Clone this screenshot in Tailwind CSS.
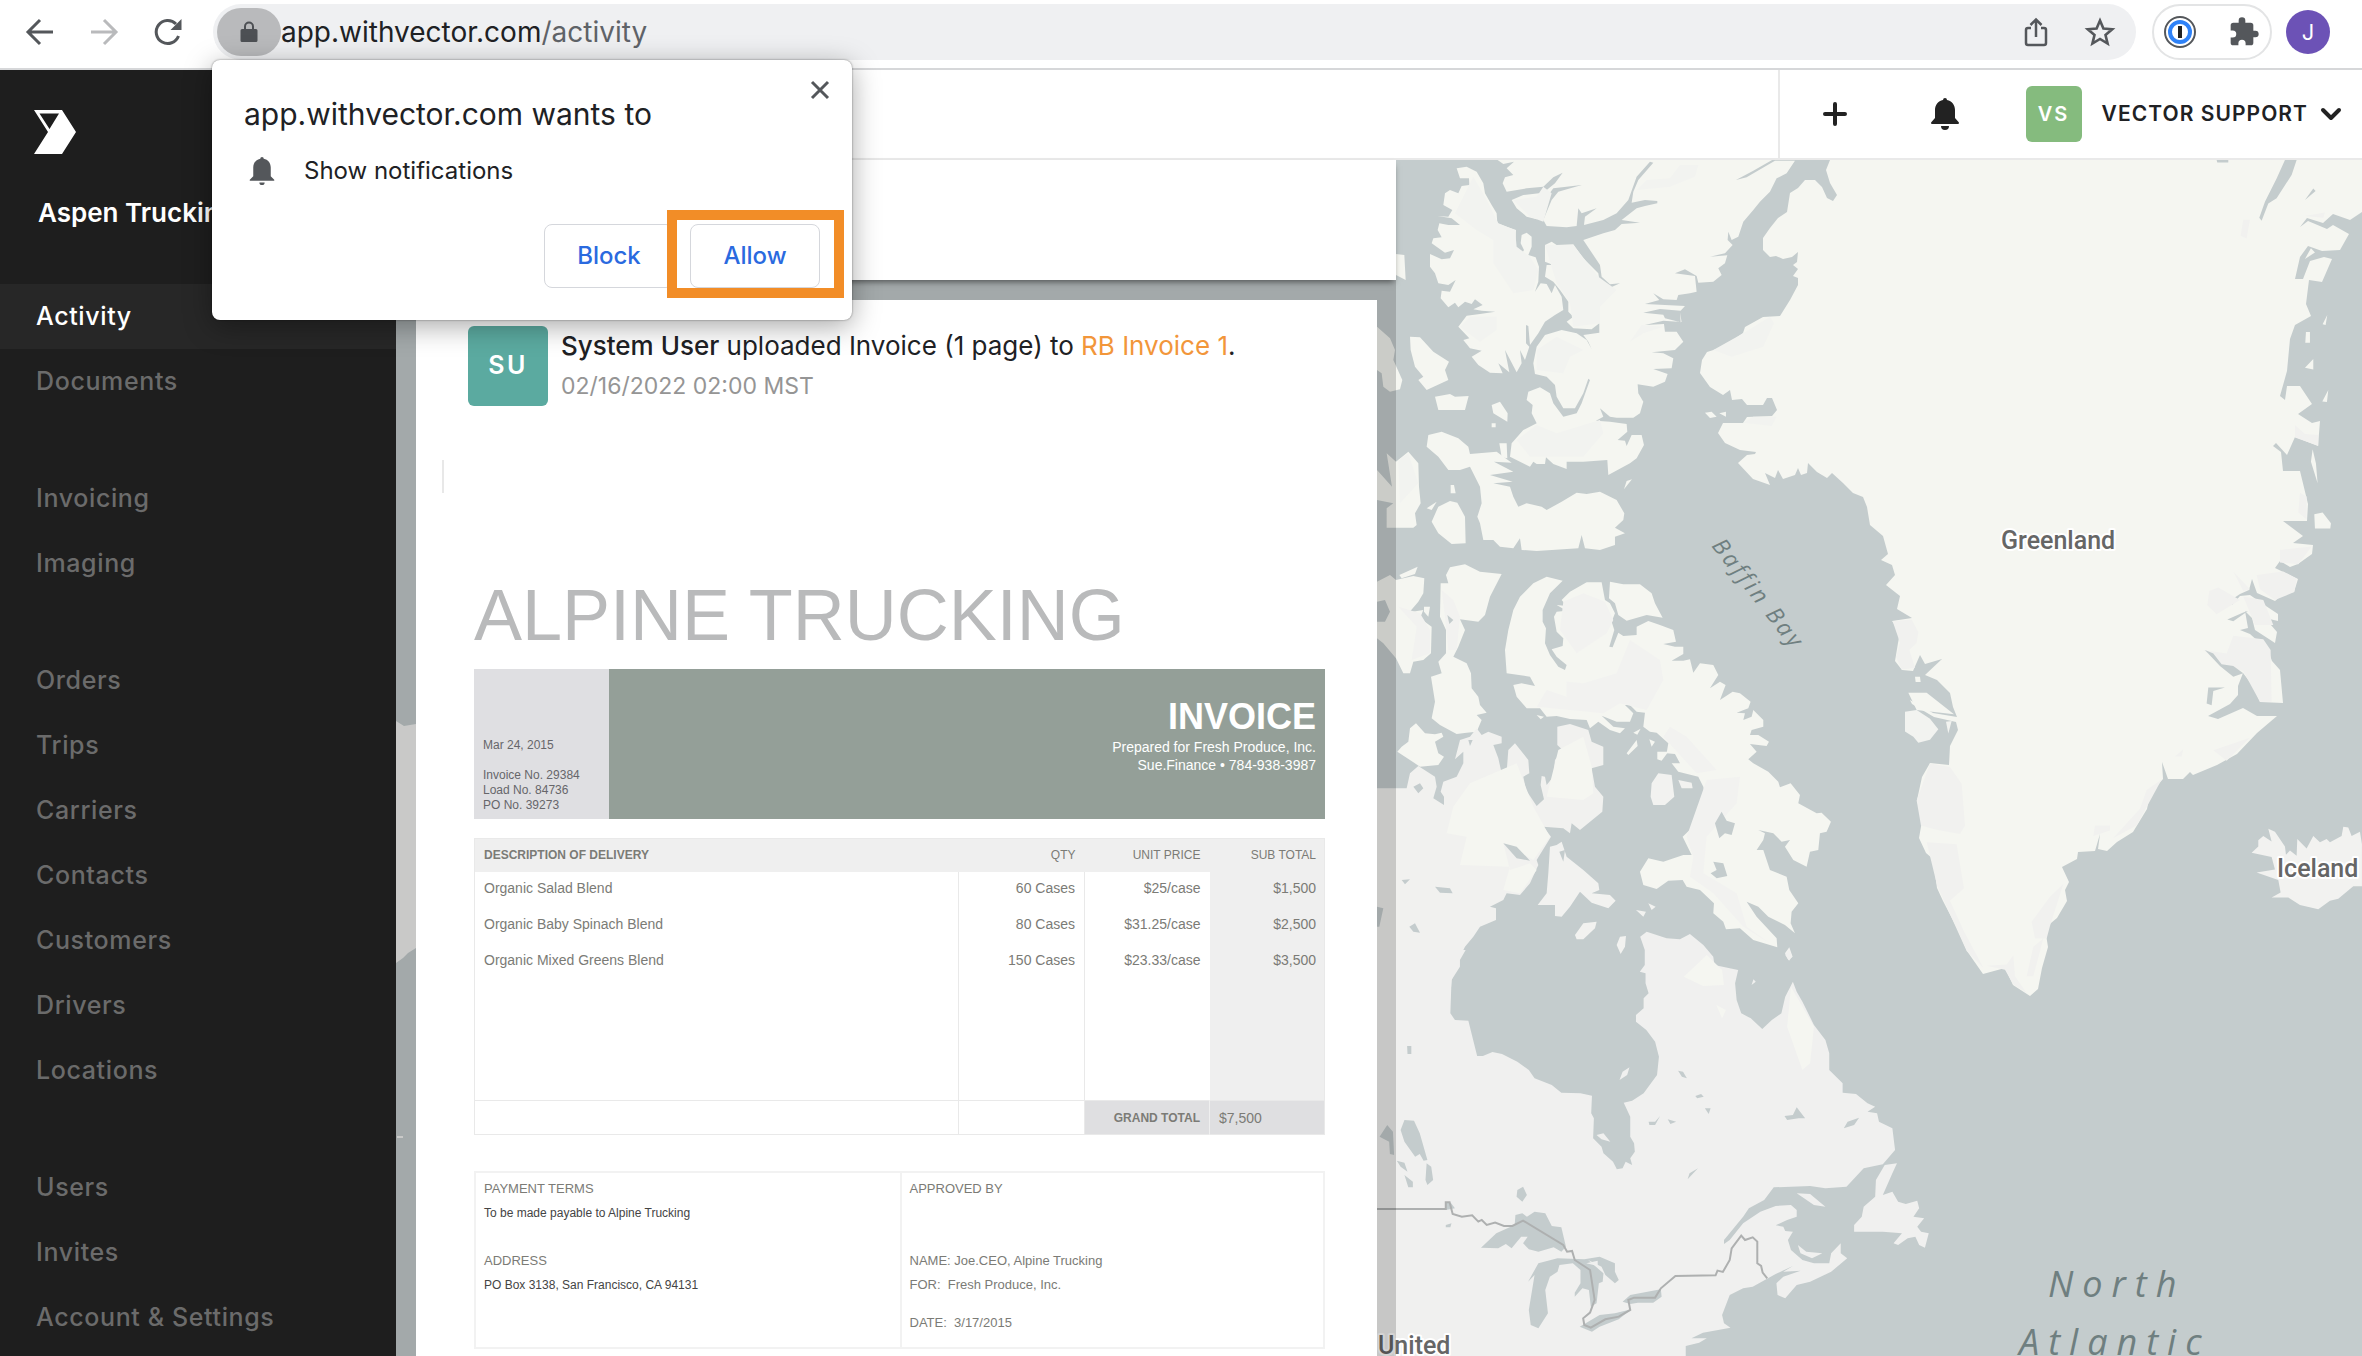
<!DOCTYPE html>
<html lang="en">
<head>
<meta charset="utf-8">
<title>Activity</title>
<script src="https://cdn.jsdelivr.net/npm/@tailwindcss/browser@4"></script>
</head>
<body class="bg-white font-['Inter',sans-serif] text-[#202124]">
<div class="relative flex min-h-screen flex-col overflow-hidden">

  <!-- Browser toolbar -->
  <div class="flex h-[70px] shrink-0 items-center border-b-2 border-[#d6d7d9] bg-white pr-8 pl-6 pb-1">
    <div class="flex w-[189px] shrink-0 gap-8">
      <button aria-label="Back" class="size-8 text-[#54575b]"><svg viewBox="0 0 32 32" class="size-8" fill="none" stroke="currentColor" stroke-width="3"><path d="M29 16H5M16 4 4 16l12 12"/></svg></button>
      <button aria-label="Forward" class="size-8 text-[#b9babc]"><svg viewBox="0 0 32 32" class="size-8" fill="none" stroke="currentColor" stroke-width="3"><path d="M3 16h24M16 4l12 12-12 12"/></svg></button>
      <button aria-label="Reload" class="size-8 text-[#54575b]"><svg viewBox="0 0 32 32" class="size-8" fill="none" stroke="currentColor" stroke-width="3"><path d="M26.500 20A11.500 11.500 0 1 1 24 8"/><path d="M29.500 3v11h-11z" fill="currentColor" stroke="none"/></svg></button>
    </div>
    <div class="flex h-14 flex-1 items-center rounded-full bg-[#eff0f2] pl-1 pr-5">
      <button aria-label="Site information" class="flex h-12 w-16 items-center justify-center rounded-full bg-[#b9babc]"><svg viewBox="0 0 18 22" class="h-[22px] w-[18px] text-[#4d5054]"><path fill="currentColor" d="M2 8h14a1.500 1.500 0 0 1 1.500 1.500v10A1.500 1.500 0 0 1 16 21H2a1.500 1.500 0 0 1-1.500-1.500v-10A1.500 1.500 0 0 1 2 8z"/><path d="M5 8V5.500a4 4 0 0 1 8 0V8" fill="none" stroke="currentColor" stroke-width="2"/></svg></button>
      <div class="flex-1 text-[28px] leading-8">app.withvector.com<span class="text-[#5f6368]">/activity</span></div>
      <button aria-label="Share" class="size-8 text-[#54575b]"><svg viewBox="0 0 32 32" class="size-8" fill="none" stroke="currentColor" stroke-width="2.500"><path d="M11 12H8a2 2 0 0 0-2 2v13a2 2 0 0 0 2 2h16a2 2 0 0 0 2-2V14a2 2 0 0 0-2-2h-3M16 21V4M10.500 9 16 3.500 21.500 9"/></svg></button>
      <button aria-label="Bookmark" class="ml-8 size-8 text-[#54575b]"><svg viewBox="0 0 32 32" class="size-8" fill="none" stroke="currentColor" stroke-width="2.600"><path d="m16 4.500 3.400 8.100 8.800.7-6.700 5.700 2.100 8.600L16 23l-7.600 4.600 2.100-8.600-6.700-5.700 8.800-.7z"/></svg></button>
    </div>
    <div class="ml-4 flex h-14 w-[120px] items-center justify-between rounded-full border-2 border-[#e3e4e5] px-[10px]">
      <button aria-label="Password manager" class="size-8"><svg viewBox="0 0 32 32" class="size-8"><circle cx="16" cy="16" r="15" fill="#fff" stroke="#54575b" stroke-width="2"/><circle cx="16" cy="16" r="10" fill="#fff" stroke="#2f82f7" stroke-width="4"/><rect x="14" y="10" width="4" height="12" fill="#222"/></svg></button>
      <button aria-label="Extensions" class="size-8 text-[#54575b]"><svg viewBox="0 0 24 24" class="size-8"><path fill="currentColor" d="M20.500 11H19V7a2 2 0 0 0-2-2h-4V3.500a2.500 2.500 0 0 0-5 0V5H4a2 2 0 0 0-2 2v3.800h1.500a2.700 2.700 0 0 1 0 5.400H2V20a2 2 0 0 0 2 2h3.800v-1.500a2.700 2.700 0 0 1 5.400 0V22H17a2 2 0 0 0 2-2v-4h1.500a2.500 2.500 0 0 0 0-5z"/></svg></button>
    </div>
    <button aria-label="Profile" class="ml-[14px] size-11 rounded-full bg-[#6c52b6] text-[22px] text-white">J</button>
  </div>

  <div class="flex flex-1">
    <!-- Sidebar -->
    <aside class="w-[396px] shrink-0 bg-[#1e1e1e]">
      <svg viewBox="0 0 42 44" class="mt-10 ml-[34px] h-11 w-[42px]"><path fill="#fff" fill-rule="evenodd" d="M0 0h28l14 22-14 22H0l14-22zM5.500 3.500l10 15.500L25 3.500z"/></svg>
      <div class="mt-[43px] mb-14 ml-[38px] text-[26px] leading-[31px] font-semibold text-white">Aspen Trucking</div>
      <nav class="flex flex-col gap-[52px] text-[25px] leading-[65px] font-medium tracking-wide text-[#6b6b6b]">
        <div class="flex flex-col">
          <a href="#" class="bg-[#272727] pl-9 text-white">Activity</a>
          <a href="#" class="pl-9">Documents</a>
        </div>
        <div class="flex flex-col">
          <a href="#" class="pl-9">Invoicing</a>
          <a href="#" class="pl-9">Imaging</a>
        </div>
        <div class="flex flex-col">
          <a href="#" class="pl-9">Orders</a>
          <a href="#" class="pl-9">Trips</a>
          <a href="#" class="pl-9">Carriers</a>
          <a href="#" class="pl-9">Contacts</a>
          <a href="#" class="pl-9">Customers</a>
          <a href="#" class="pl-9">Drivers</a>
          <a href="#" class="pl-9">Locations</a>
        </div>
        <div class="flex flex-col">
          <a href="#" class="pl-9">Users</a>
          <a href="#" class="pl-9">Invites</a>
          <a href="#" class="pl-9">Account &amp; Settings</a>
        </div>
      </nav>
    </aside>

    <div class="flex min-w-0 flex-1 flex-col">
      <header class="flex h-[90px] shrink-0 justify-end border-b-2 border-[#e9e9e9] bg-white">
        <div class="flex items-center border-l-2 border-[#e9e9e9] pr-5 pl-[43px]">
          <button aria-label="Add" class="size-6"><svg viewBox="0 0 24 24" class="size-6" stroke="#222" stroke-width="4" stroke-linecap="round"><path d="M12 2v20M2 12h20"/></svg></button>
          <button aria-label="Notifications" class="ml-[84px] h-8 w-7"><svg viewBox="0 0 28 32" class="h-8 w-7" fill="#222"><path d="M14 0a2 2 0 0 1 2 2c5 1 8 5 8 10v8l3.500 4c1 1 .3 2-1 2h-25c-1.300 0-2-1-1-2L4 20v-8C4 7 7 3 12 2a2 2 0 0 1 2-2zM10 28h8a4 4 0 0 1-8 0z"/></svg></button>
          <span class="ml-[67px] flex size-14 items-center justify-center rounded-md bg-[#85bb7e] text-xl font-semibold tracking-widest text-white">VS</span>
          <button class="ml-5 flex items-center gap-3 text-[21px] font-semibold tracking-wider">VECTOR SUPPORT
            <svg viewBox="0 0 22 14" class="h-[14px] w-[22px]" fill="none" stroke="#222" stroke-width="4" stroke-linecap="round" stroke-linejoin="round"><path d="m3 3 8 8 8-8"/></svg></button>
        </div>
      </header>

      <main class="relative flex flex-1">
        <!-- Map -->
        <svg viewBox="396 160 1966 1196" preserveAspectRatio="xMaxYMin slice" class="absolute inset-0 h-full w-full bg-[#c4cccd]">
          <!-- Greenland -->
          <path fill="#f5f6f1" d="M1830 160 1826 170 1830 183 1837 195 1833 201 1827 198 1822 187 1815 180 1805 180 1798 188 1790 193 1787 212 1778 218 1770 228 1763 238 1763 250 1770 257 1776 256 1783 259 1792 257 1798 252 1797 262 1793 265 1798 269 1793 276 1798 278 1798 285 1790 300 1780 316 1763 317 1745 327 1743 333 1723 347 1707 352 1702 360 1700 373 1710 387 1723 395 1730 390 1732 400 1742 399 1747 405 1763 405 1767 398 1772 398 1777 410 1772 416 1747 417 1743 423 1723 423 1718 433 1725 443 1740 450 1756 452 1755 454 1747 455 1738 463 1753 479 1770 485 1765 473 1775 478 1778 470 1783 479 1795 475 1798 468 1801 475 1807 473 1808 463 1817 472 1827 478 1832 473 1843 483 1853 493 1863 497 1867 507 1870 525 1883 536 1888 554 1881 560 1892 565 1895 575 1886 585 1900 596 1897 609 1912 618 1892 621 1900 632 1898 643 1895 661 1902 670 1913 671 1920 655 1925 664 1942 659 1925 675 1937 680 1950 693 1953 707 1957 717 1933 713 1910 700 1912 704 1934 717 1956 722 1958 730 1950 746 1949 765 1930 763 1922 777 1917 800 1922 821 1919 838 1926 853 1933 859 1937 888 1943 901 1957 928 1967 951 1983 974 2005 968 2013 985 2030 996 2038 989 2042 968 2048 947 2045 928 2057 918 2067 901 2065 890 2069 882 2062 867 2077 859 2078 852 2095 851 2100 834 2098 849 2107 851 2117 842 2133 832 2147 809 2150 794 2163 779 2162 762 2168 779 2183 779 2190 772 2193 775 2217 765 2237 754 2257 733 2277 716 2257 716 2243 708 2218 719 2208 716 2230 704 2238 695 2238 686 2243 673 2253 686 2260 702 2283 703 2280 670 2272 661 2268 650 2250 634 2240 630 2248 628 2245 611 2252 618 2255 630 2275 643 2277 632 2265 618 2278 621 2278 614 2263 604 2250 595 2240 596 2232 605 2228 602 2240 594 2249 590 2252 579 2257 593 2275 601 2283 594 2294 592 2298 579 2275 568 2280 561 2290 567 2298 564 2312 554 2313 545 2293 543 2303 536 2283 521 2307 521 2308 504 2300 471 2283 471 2281 452 2273 446 2276 443 2287 455 2295 437 2318 446 2320 421 2312 423 2298 414 2312 404 2300 386 2287 386 2285 400 2280 396 2287 371 2290 339 2295 325 2311 316 2306 304 2309 280 2322 282 2332 259 2324 257 2310 261 2303 279 2295 279 2300 257 2308 246 2322 251 2340 250 2349 234 2333 225 2327 229 2308 221 2300 227 2307 218 2323 223 2333 214 2350 220 2362 212V160Z"/>
          <!-- Greenland lowlands, fjords and coastal islands -->
          <g transform="translate(1850 150) scale(.3333 .3571)">
            <path fill="#f1f1ef" d="M128 1320 185 1315 205 1350 200 1380 178 1400 195 1450 155 1455 138 1420 150 1380ZM1078 1235 1105 1225 1170 1260 1100 1300 1072 1275ZM1150 1180 1200 1230 1180 1235ZM1220 1190 1300 1180 1340 1200 1333 1238 1275 1260 1230 1230ZM1180 1250 1240 1260 1270 1330 1215 1330ZM1150 1360 1240 1370 1262 1400 1265 1545 1230 1545 1180 1460 1110 1440 1060 1400 1130 1410ZM1290 1120 1385 1110 1345 1160 1290 1155ZM1350 960 1370 970 1370 1035 1345 1015ZM1335 770 1365 795 1405 798 1405 828 1335 805ZM1180 195 1200 195 1190 248 1172 240ZM1365 185 1425 175 1420 190Z"/>
            <path fill="#c4cccd" d="M1305 28H1340L1325 70 1280 135 1255 150 1235 198 1228 190 1245 145 1280 80ZM1365 140 1390 108 1397 115ZM1100 28H1135V35H1102ZM1065 1400 1090 1410 1115 1440 1150 1445 1180 1465 1150 1475 1110 1445ZM1075 1505 1125 1505 1090 1515 1085 1555 1070 1550ZM1132 1315 1180 1295 1195 1290 1150 1320Z"/>
            <path fill="#f5f6f1" d="M1368 510h12v30h-14zM1432 462l-5 28-9-2zM1390 585v30l-25-5zM1435 672l-4 34-14-2zM1388 838l10 40 5 55-20-60zM1393 1020l25-5 25 30-2 15h-46zM1365 305l18-30 12 12zM195 1475h15l2 15h-15zM175 1520 230 1520 312 1580 200 1568Z"/>
          </g>
          <g transform="translate(1850 700) scale(.3333 .4184)">
            <path fill="#f1f1ef" d="M240 152 300 160 335 200 345 300 330 320 260 310 213 300 200 240ZM230 340 320 345 342 450 300 480 340 550 400 640 350 600 262 445ZM410 635 470 632 490 610 495 660 530 700 490 680 465 645ZM545 530 600 470 640 440 600 540 590 570 555 570ZM550 590 580 570 550 660 530 660ZM735 300 780 300 780 312 730 325ZM975 135 1000 118 995 135ZM1090 120 1200 90 1130 145ZM890 215 935 190 860 300 790 330 870 260Z"/>
            <path fill="#f2f3f0" d="M165 28 200 24 240 45 265 70 240 95 205 102 190 88 165 75ZM288 52 305 50 295 80Z"/>
            <path fill="#f2f2f0" d="M1205 365 1225 350 1225 335 1240 325 1265 338 1255 308 1275 315 1305 350 1308 370 1320 360 1340 372 1342 332 1370 355 1390 325 1410 340 1430 332 1440 340 1475 325 1480 303 1495 305 1505 325 1530 315 1536 345V445L1510 445 1465 475 1440 480 1405 500 1350 490 1315 472 1265 472 1292 460 1285 430 1220 412 1275 405 1265 375Z"/>
          </g>
          <!-- Ellesmere, Devon and neighbouring islands -->
          <g transform="translate(1370 150) scale(.3333)" fill="#f5f6f1">
            <path d="M260 55 290 50 320 65 340 100 345 130 365 165 380 190 382 220 410 230 438 240 436 290 455 312 462 300 452 280 455 255 470 248 485 260 485 290 475 315 497 322 507 350 505 395 495 425 512 400 530 402 545 430 555 405 575 440 580 480 555 495 525 515 505 550 480 585 475 528 468 525 468 580 478 590 465 630 450 600 455 640 440 667 405 600 418 667 385 640 398 670 360 668 325 645 305 620 335 602 300 595 280 570 298 565 265 530 290 497 330 492 376 485 335 482 310 478 338 465 315 448 305 462 285 455 265 472 255 458 235 472 212 445 215 422 240 425 257 390 235 405 205 400 195 370 180 350 180 312 215 328 240 325 252 300 225 308 185 280 190 265 215 262 203 240 208 220 235 225 270 225 245 205 203 198 235 200 247 180 220 165 225 130 240 120 265 130 275 108 298 105 297 85 270 85Z"/>
            <path d="M380 28H1210L1150 62 1098 90 1130 82 1215 32H1275L1250 70 1220 85 1200 125 1170 155 1150 180 1120 215 1105 260 1085 270 1075 245 1073 270 1088 285 1065 310 1020 320 1072 316 1065 340 1045 355 1055 375 1030 395 985 398 980 378 945 358 915 370 975 378 980 425 960 430 925 435 920 450 880 448 850 430 868 450 825 462 945 468 932 482 870 477 820 488 880 494 885 505 932 517 930 487 935 516 880 512 825 525 882 522 885 545 920 545 940 575 915 600 845 607 880 610 910 625 905 655 850 657 893 672 885 695 850 710 803 703 805 730 820 755 810 790 790 803 740 803 720 800 690 775 700 800 678 812 720 815 770 822 772 845 743 870 765 872 770 888 785 855 815 855 822 885 800 925 780 940 715 975 712 930 640 935 590 935 590 957 550 942 528 922 525 942 500 942 490 935 480 950 420 920 425 880 460 840 500 820 485 790 488 765 470 750 475 725 510 712 540 730 550 760 580 800 620 790 635 760 660 690 655 686 640 730 615 775 580 775 560 740 555 705 530 680 495 672 490 640 500 590 525 555 575 540 620 550 650 570 665 597 655 575 640 555 688 548 688 520 665 538 610 535 590 515 610 500 595 485 595 455 570 420 550 395 525 380 530 345 550 345 525 335 525 285 545 275 560 285 610 283 640 325 685 370 690 400 720 413 750 400 720 403 695 380 690 345 640 270 700 250 735 240 755 222 810 218 755 210 800 175 825 168 862 160V153L825 150 785 158 790 125 805 90 850 38 840 35 800 80 775 150 740 190 700 210 642 225 645 200 680 175 635 190 625 175 620 228 590 232 530 228 520 210 545 150 565 125 635 105 550 115 520 155 500 208 470 200 440 175 425 150 460 135 520 128 555 100 578 68 550 82 520 110 470 115 410 125 398 100 405 82 430 75 410 55 432 35 400 42Z"/>
            <path d="M170 890 175 855 215 845 265 865 295 890 300 912 380 905 425 938 372 935 430 965 360 975 428 995 370 1000 420 1010 430 1040 445 1070 470 1060 515 1070 530 1080 575 1055 620 1028 650 1032 690 1025 740 1050 763 1090 760 1110 735 1133 765 1150 735 1160 735 1185 690 1200 645 1195 635 1155 625 1195 500 1203 455 1200 450 1165 430 1195 390 1190 370 1170 340 1170 330 1120 322 1100 335 1060 330 1010 300 950 270 960 235 960 205 920Z"/>
            <path d="M78 312 103 315 107 390 78 375ZM120 560 150 562 190 605 237 635 225 660 235 690 170 720 145 690 160 680 135 650 122 600ZM21 530 60 565 75 600 70 630 97 690 90 718 60 725 40 710 35 670 21 660ZM195 740 240 732 255 740 296 738 285 780 205 780ZM365 765 390 755 413 790 412 815 370 790ZM388 880 410 880 412 925 395 922ZM185 1115 205 1070 240 1053 262 1058 285 1100 287 1180 245 1182 205 1150ZM50 910 78 935 115 905 145 940 147 1010 152 1060 135 1090 140 1125 130 1133H50L50 1075 70 1060 21 1050V960L66 1010ZM242 1005h10l5 25h-15zM762 1018l8-25 16-5zM365 820h12v12h-12zM1005 788l20-3 15 15-20 4zM1048 790l20-5v15zM170 1075l30-20-15 25z"/>
            <path fill="#f2f3f0" d="M255 190 310 80 345 140 385 220 435 240 440 290 480 320 505 360 490 420 430 430 370 340 370 270 320 240ZM430 150 500 140 520 110 545 130 520 215 480 200ZM800 120 830 90 900 85 930 45 985 45 975 80 900 110 800 120ZM1030 600 1120 550 1200 500 1212 520 1180 590 1085 620ZM525 285 610 285 685 380 740 420 690 470 690 520 610 530 600 460 560 400ZM500 600 560 560 640 600 600 620 580 670 500 660ZM440 870 500 825 560 850 690 810 700 850 640 920 480 920ZM270 530 300 500 380 500 380 540 330 575ZM85 930 115 910 145 1000 90 1060ZM1120 818 1150 800 1220 800 1205 828ZM780 575 815 525 880 530 820 550Z"/>
          </g>
          <!-- Baffin Island and the Arctic mainland -->
          <g transform="translate(1370 550) scale(.3333)" fill="#f5f6f1">
            <path d="M575 150 600 125 650 97 695 97 705 150 720 160 735 190 725 215 733 240 718 290 728 292 745 248 760 258 800 255 800 230 835 213 870 225 910 240 918 275 880 282 915 290 940 290 940 312 905 332 940 332 960 328 970 368 990 340 1030 345 1045 375 1020 415 1050 395 1067 405 1050 450 1088 425 1110 430 1142 455 1135 475 1100 488 1125 490 1120 510 1145 500 1150 480 1180 510 1180 530 1145 540 1140 555 1165 555 1197 575 1190 588 1140 582 1160 605 1135 628 1150 640 1195 665 1225 695 1230 712 1262 700 1290 735 1285 760 1340 790 1355 788 1383 815 1370 845 1350 850 1345 900 1320 905 1310 950 1270 930 1245 890 1260 870 1235 875 1210 850 1165 840 1185 850 1180 870 1160 900 1180 900 1200 960 1250 980 1258 1020 1285 1060 1265 1085 1262 1120 1275 1150 1245 1125 1195 1100 1165 1070 1130 1055 1160 1100 1220 1165 1222 1192 1150 1170 1110 1135 1068 1138 1060 1115 1030 1090 1032 1060 990 1020 950 1010 938 990 895 992 860 1017 820 1005 810 965 835 925 880 935 940 915 965 915 938 860 980 820 1010 770 1000 710 985 680 925 665 905 640 930 640 915 612 890 610 895 580 860 548 840 545 820 530 825 488 800 485 780 465 765 465 790 490 780 515 740 515 695 497 730 530 765 535 750 550 720 540 685 515 660 535 650 510 600 507 560 498 530 500 510 475 470 475 440 440 430 405 455 400 495 408 480 380 410 370 405 300 415 240 430 180 450 140 490 100 530 80 578 92 540 130 518 180 518 215 528 235 525 280 540 315 565 350 585 360 590 345 560 320 545 298 578 288 580 265 560 245 552 200 560 185 590 182 560 165 590 168Z"/>
            <path d="M720 95 760 103 810 103 845 130 855 160 878 203 830 195 770 212 745 195 735 160 717 145ZM228 75 240 52 285 43 330 65 395 72 360 140 345 195 325 215 270 208 285 240 265 290 250 320 290 340 303 370 305 415 325 440 330 465 350 488 320 495 335 510 320 545 290 548 260 552 210 525 185 505 195 455 183 380 215 370 205 335 228 310 228 240 210 200 212 100 235 100ZM78 90 130 78 163 85 160 130 145 155 118 187 160 180 150 205 185 230 183 310 160 330 130 335 120 370 100 370 78 325 40 280 21 265V215L45 215 60 185 45 150 21 155V95L60 75ZM88 75 143 50 135 72 95 85ZM162 170 180 170 175 200 162 185ZM82 605 95 590 115 575 120 535 138 520 165 550 195 553 215 548 220 560 195 575 205 610 222 620 205 645 150 650 105 620ZM770 610 800 570 803 588 775 615ZM838 568 855 575 845 590ZM862 605 895 605 875 632 862 628ZM500 495 522 500 512 508ZM562 375h20v8h-20zM790 548l22-12-10 18z"/>
            <path fill="#f1f1ef" d="M21 715H110L120 670 145 648 195 680 200 710 190 745 222 765 222 740 212 725 220 695 260 680 280 640 280 605 255 628 270 570 300 560 320 535 335 555 355 545 395 560 395 580 370 585 385 625 395 670 410 665 415 600 435 580 475 630 478 670 460 680 468 720 500 768 522 748 512 705 515 678 525 680 530 705 550 680 555 630 578 600 562 585V530L600 522 655 540 665 575 700 590 700 645 665 655 675 710 700 740 697 785 630 840 605 820 600 850 580 835 520 830 543 860 500 930 505 945 480 1000 450 1035 410 1030 400 1050 360 1070 378 1075 378 1110 330 1130 310 1160 285 1190 270 1220 245 1290 240 1350H21Z"/>
            <path fill="#f5f6f1" d="M250 770 300 700 440 640 490 770 540 860 490 930 400 880 420 960 480 940 500 960 450 1030 400 1020 420 950 270 945 290 860 230 850ZM565 600 640 560 665 650 670 730 640 750 530 740Z"/>
            <path fill="#f2f2f0" d="M540 890 560 885 575 875 590 920 640 960 685 1000 688 1020 665 1030 720 1035 737 1052 715 1075 665 1058 630 1025 600 1070 575 1100 555 1098 555 1065 503 1065 530 1030 535 970ZM615 1155 640 1120 680 1115 675 1135 640 1168 620 1168ZM740 1185 750 1160 768 1158 765 1190 752 1212ZM842 740 845 700 865 670 905 675 913 740 885 765 850 765ZM925 690 965 698 968 715 935 715ZM798 1080 828 1085 820 1100ZM835 1060 857 1070 845 1080ZM1245 1210 1258 1192 1268 1220 1255 1230ZM580 155 640 130 705 155 730 210 710 250 620 310 570 240ZM500 470 530 420 590 440 590 395 640 400 740 370 780 270 870 330 880 390 830 480 750 460 700 490 600 480ZM980 670 1040 660 950 560 900 530 880 560ZM1010 690 1110 680 1100 760 1010 860 1000 970 1100 1030 1130 1130 1200 1180 1120 1130 1030 1030 960 980 970 920 950 860ZM85 170 150 190 180 240 180 310 125 330 140 230ZM215 120 250 150 270 200 260 300 235 300 225 200Z"/>
            <path fill="#c4cccd" d="M400 880 440 890 480 932 440 925ZM195 1010 240 1015 248 1030 210 1028ZM1035 820 1055 785 1070 812 1095 820 1085 855 1065 850 1048 865ZM1030 935 1060 940 1072 978 1040 985 1022 970 1040 960ZM130 710 150 700 160 715 145 730ZM95 990 120 988 105 1003ZM118 1130 135 1120 150 1148 130 1145ZM232 195 250 210 238 222ZM568 905 585 900 580 935ZM295 570 308 570 300 588ZM21 1070 40 1075 28 1130 21 1130Z"/>
          </g>
          <!-- Hudson Bay coast, Quebec, the Maritimes and the Great Lakes -->
          <g transform="translate(1370 950) scale(.3827 .3333)" fill="#f0f0ef">
            <path d="M16 0H250L235 30 235 50 213 90 210 190 222 210 257 212 280 318 295 318 320 306 345 312 385 335 415 360 430 385 475 405 500 428 550 430 580 437 578 490 585 505 583 565 605 590 610 610 635 635 645 658 660 655 668 635 685 645 680 625 692 605 690 580 680 560 680 500 663 458 685 452 715 430 750 375 755 320 745 275 722 240 695 215 695 195 715 175 715 145 728 130 720 100 720 70 705 65 718 45 718 0 706 -40 723 -55 775 -35 810 -32 836 -48 871 -15 897 20 900 45 940 55 962 60 954 100 958 150 970 190 995 205 1025 237 1050 210 1075 190 1085 140 1105 95 1115 125 1130 155 1160 225 1190 270 1200 310 1200 360 1235 400V428L1270 432 1300 460 1320 470 1300 485 1325 490 1330 515 1365 535 1372 600 1340 643 1290 655 1245 710 1190 715 1150 708 1055 712 1030 750 990 775 975 800 925 870V882L940 870 975 820 1020 785 1060 768 1100 765 1115 780V800L1090 810 1060 826 1080 830 1085 843 1105 845 1092 870 1100 900 1130 930 1160 940 1200 940 1205 910 1230 880 1230 910 1247 925 1205 965 1150 995 1115 1005 1085 1045 1065 1035 1062 1000 1080 980 1125 962 1080 965 1105 948 1060 972 1000 1010 975 1015 940 1035 920 1095 925 1120 942 1133 870 1148 840 1165 880 1165 860 1178 825 1188V1218H16Z"/>
            <path d="M1345 645 1377 640 1365 670 1340 735 1365 725 1380 755 1400 762 1430 752 1435 775 1420 800 1448 805 1430 830 1440 845 1460 850 1450 893 1435 885 1425 860 1405 865 1380 885 1368 880 1390 850 1340 845 1265 845V825L1285 800 1290 770 1320 740 1322 690ZM1115 730 1150 732 1190 770 1160 765ZM1118 885 1140 905 1182 910 1155 925 1125 910ZM592 555 610 550 628 575 605 568ZM652 390 660 365 678 352 672 375ZM997 105 1002 88 1008 95ZM1085 15 1095 0 1103 20 1095 32Z"/>
            <path fill="#f5f6f1" d="M820 80 880 15 920 60 925 105 870 108ZM1090 230 1100 110 1160 230 1150 340 1130 360ZM905 165 930 180 920 205Z"/>
            <g fill="#c4cccd">
              <path d="M290 893 330 850 378 825 380 795 398 790 410 800 430 785 458 790 475 828 500 832 512 890 500 905 480 892 440 905 415 898 400 880 412 860 395 860 370 895 355 882 335 895ZM413 995 440 940 490 925 560 928 600 920 640 940 640 965 650 990 640 1000 615 975 605 950 570 930 610 970 608 995 598 1000 592 1060 577 1070 572 1020 555 1015 535 1040 535 1028 550 1000V960L530 940 495 945 490 965 470 980 458 1020 465 1090 440 1135 420 1125 415 1080 430 975ZM548 1130 600 1095 640 1090 683 1078 650 1108 600 1130 580 1145ZM660 1055 680 1035 760 1018 762 1040 740 1058 700 1058 680 1062ZM80 540 90 510 115 512 130 550 150 630 140 632 130 612 118 620 90 575ZM70 632 90 638 98 665 80 650ZM148 640 160 650 165 690 150 705 145 690ZM90 675 112 695 112 712 100 712ZM25 560 45 525 60 545 63 615 52 612 50 575ZM385 720 400 710 410 735 398 755 383 740ZM97 288 108 288 108 312 98 312ZM197 757 212 760 222 775 198 780ZM198 825 213 820 210 832 198 832ZM805 362 818 365 828 385 815 380ZM850 438 865 432 872 440 855 445ZM875 475 890 475 885 492ZM728 515 745 515 758 498 745 525 730 525ZM778 508 800 515 785 522ZM1083 498 1105 495 1115 472 1137 505 1120 505 1090 510ZM1238 535 1248 515 1278 503 1265 525ZM830 688 835 670 857 655Z"/>
            </g>
            <path d="M565 940 595 932 595 948Z"/>
            <path fill="none" stroke="#aeb0b0" stroke-width="2" vector-effect="non-scaling-stroke" d="M18 777H198V757H208L216 792 240 800 267 796 283 815 292 810 305 825 327 818 350 828 372 828 400 812 505 885 515 905 528 903 535 930 575 960 587 1050 575 1088 557 1105 560 1125 577 1133 615 1108 650 1100 680 1080 675 1050 690 1043H745L760 1015 798 978 903 976 908 962 922 966 940 930 945 895 970 857 980 870 1000 862 1012 875V940L1022 948 1026 968 1038 985"/>
          </g>
          <path fill="#f2f2f1" d="M396 721 404 726 416 724V948L408 953 403 958 396 963ZM397 1138h6v-2h-6z"/>
          <g font-family="Roboto, sans-serif" font-weight="500" font-size="25" fill="#666" stroke="#fff" stroke-width="4" stroke-linejoin="round" paint-order="stroke">
            <text x="2001" y="549">Greenland</text>
            <text x="2277" y="877">Iceland</text>
            <text x="1378" y="1354">United</text>
          </g>
          <g font-family="'Open Sans', sans-serif" font-style="italic" fill="#6f7f80">
            <text x="2048" y="1297" font-size="36" letter-spacing="9">North</text>
            <text x="2019" y="1355" font-size="36" letter-spacing="9">Atlantic</text>
            <text transform="translate(1711 546) rotate(52)" font-size="23" letter-spacing="3">Baffin Bay</text>
          </g>
        </svg>

        <!-- Activity feed over the map -->
        <section class="relative flex w-[1000px] flex-col bg-black/17">
          <div class="h-[120px] shrink-0 bg-white shadow-[0_4px_6px_-2px_rgba(0,0,0,0.5)]"></div>
          <article class="mt-5 mr-[19px] ml-5 flex-1 bg-white pt-[26px]">
            <div class="ml-[52px] flex gap-[13px]">
              <span class="flex size-20 items-center justify-center rounded-md bg-[#5baaa0] text-[25px] font-semibold tracking-widest text-white">SU</span>
              <div>
                <p class="text-[26px] leading-10"><span class="font-medium">System User</span> uploaded Invoice (1 page) to <a href="#" class="text-[#f2963a]">RB Invoice 1</a>.</p>
                <p class="text-[23px] leading-10 text-[#959595]">02/16/2022 02:00 MST</p>
              </div>
            </div>
            <div class="mt-[54px] ml-[26px] h-[33px] w-0.5 bg-[#e8e8e8]"></div>

            <!-- Scanned invoice -->
            <div class="mt-[86px] mr-[52px] ml-[58px] font-['Liberation_Sans',sans-serif] text-[#7b7b76]">
              <h1 class="text-7xl leading-[72px] text-[#b9babb]">ALPINE TRUCKING</h1>
              <div class="mt-[18px] flex h-[150px]">
                <div class="flex w-[135px] flex-col justify-end bg-[#dfdfe2] pb-[6px] pl-[9px] text-xs leading-[15px] text-[#66666a]">
                  <p class="mb-[15px]">Mar 24, 2015</p>
                  <p>Invoice No. 29384</p>
                  <p>Load No. 84736</p>
                  <p>PO No. 39273</p>
                </div>
                <div class="flex-1 bg-[#949f98] pt-7 pr-[9px] text-right text-white">
                  <h2 class="text-4xl leading-10 font-bold">INVOICE</h2>
                  <p class="mt-px text-[14px] leading-[18px]">Prepared for Fresh Produce, Inc.</p>
                  <p class="text-[14px] leading-[18px]">Sue.Finance • 784-938-3987</p>
                </div>
              </div>
              <table class="mt-[19px] w-full table-fixed border-collapse border border-[#e9e9e9] text-right text-sm">
                <colgroup><col><col class="w-[126px]"><col class="w-[125px]"><col class="w-[115px]"></colgroup>
                <thead>
                  <tr class="h-[33px] bg-[#efefef] text-xs">
                    <th scope="col" class="pl-[9px] text-left font-bold">DESCRIPTION OF DELIVERY</th>
                    <th scope="col" class="pr-[9px] font-normal">QTY</th>
                    <th scope="col" class="pr-[9px] font-normal">UNIT PRICE</th>
                    <th scope="col" class="pr-2 font-normal">SUB TOTAL</th>
                  </tr>
                </thead>
                <tbody>
                  <tr class="h-9"><td class="pb-1 pl-[9px] text-left">Organic Salad Blend</td><td class="border-x border-[#e9e9e9] pr-[9px] pb-1">60 Cases</td><td class="pr-[9px] pb-1">$25/case</td><td class="bg-[#efefef] pr-2 pb-1">$1,500</td></tr>
                  <tr class="h-9"><td class="pb-1 pl-[9px] text-left">Organic Baby Spinach Blend</td><td class="border-x border-[#e9e9e9] pr-[9px] pb-1">80 Cases</td><td class="pr-[9px] pb-1">$31.25/case</td><td class="bg-[#efefef] pr-2 pb-1">$2,500</td></tr>
                  <tr class="h-9"><td class="pb-1 pl-[9px] text-left">Organic Mixed Greens Blend</td><td class="border-x border-[#e9e9e9] pr-[9px] pb-1">150 Cases</td><td class="pr-[9px] pb-1">$23.33/case</td><td class="bg-[#efefef] pr-2 pb-1">$3,500</td></tr>
                  <tr class="h-[121px]"><td></td><td class="border-x border-[#e9e9e9]"></td><td></td><td class="bg-[#efefef]"></td></tr>
                </tbody>
                <tfoot>
                  <tr class="h-[34px] border-t border-[#e9e9e9]"><td></td><td class="border-x border-[#e9e9e9]"></td><th scope="row" class="border-r border-[#efefef] bg-[#dfdfe1] pr-[9px] text-right text-xs font-bold">GRAND TOTAL</th><td class="bg-[#dfdfe1] pl-[9px] text-left">$7,500</td></tr>
                </tfoot>
              </table>
              <div class="mt-9 grid h-[178px] grid-cols-2 border-2 border-[#f2f2f2] text-[13px] leading-6">
                <div class="pt-1 pl-2">
                  <p>PAYMENT TERMS</p>
                  <p class="text-xs leading-6 text-[#444]">To be made payable to Alpine Trucking</p>
                  <p class="mt-6">ADDRESS</p>
                  <p class="text-xs leading-6 text-[#444]">PO Box 3138, San Francisco, CA 94131</p>
                </div>
                <div class="border-l-2 border-[#f2f2f2] pt-1 pl-2">
                  <p>APPROVED BY</p>
                  <p class="mt-12">NAME: Joe.CEO, Alpine Trucking</p>
                  <p>FOR:&nbsp; Fresh Produce, Inc.</p>
                  <p class="mt-[14px]">DATE:&nbsp; 3/17/2015</p>
                </div>
              </div>
            </div>
          </article>
        </section>
      </main>
    </div>
  </div>

  <!-- Permission prompt -->
  <div role="dialog" aria-label="Permission request" class="absolute top-[60px] left-[212px] h-[260px] w-[640px] rounded-lg bg-white pt-9 pl-8 shadow-[0_0_2px_rgba(0,0,0,0.5),0_6px_28px_rgba(0,0,0,0.35)]">
    <button aria-label="Close" class="absolute top-5 right-[22px] size-5"><svg viewBox="0 0 20 20" class="size-5" stroke="#54575b" stroke-width="3"><path d="m2 2 16 16M18 2 2 18"/></svg></button>
    <h2 class="text-[30px] leading-9">app.withvector.com wants to</h2>
    <p class="mt-5 flex items-center gap-[29px] pl-[5px] text-2xl leading-[38px]"><svg viewBox="0 0 28 32" class="h-7 w-[26px]" fill="#54575b"><path d="M14 0a2 2 0 0 1 2 2c5 1 8 5 8 10v10l4 4v1H0v-1l4-4V12C4 7 7 3 12 2a2 2 0 0 1 2-2zM11 29h6a3 3 0 0 1-6 0z"/></svg>Show notifications</p>
    <div class="mt-[34px] mr-8 flex justify-end gap-4 text-2xl font-medium text-[#2a6adf]">
      <button class="h-16 w-[130px] rounded-lg border border-[#d5d7dc]">Block</button>
      <button class="h-16 w-[130px] rounded-lg border border-[#d5d7dc]">Allow</button>
    </div>
    <div class="pointer-events-none absolute top-[150px] right-2 h-[88px] w-[177px] border-[10px] border-[#f28d27]"></div>
  </div>
</div>
</body>
</html>
